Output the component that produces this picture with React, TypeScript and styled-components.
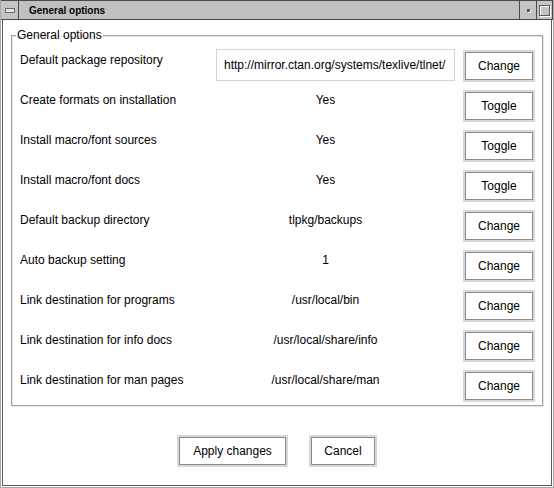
import styled, { createGlobalStyle } from "styled-components"

const GlobalStyle = createGlobalStyle`
  html, body {
    margin: 0;
    padding: 0;
    background: #ffffff;
  }
  body {
    font-family: "Liberation Sans", Arial, sans-serif;
    font-size: 12px;
    color: #000000;
  }
`

const Window = styled.div`
  width: 554px;
  height: 488px;
  box-sizing: border-box;
  display: flex;
  flex-direction: column;
  background: #ffffff;
  border-left: 1px solid #a8a8a8;
  border-right: 1px solid #a8a8a8;
  border-bottom: 1px solid #a8a8a8;
`

const Frame = styled.div`
  flex: 1;
  display: flex;
  flex-direction: column;
  margin: 0 1px 1px 1px;
  border-left: 1px solid #5c5c5c;
  border-right: 1px solid #5c5c5c;
  border-bottom: 1px solid #5c5c5c;
`

const TitleBar = styled.div`
  height: 20px;
  display: flex;
  box-sizing: border-box;
  border-top: 1px solid #4a4a4a;
  border-bottom: 1px solid #4a4a4a;
  background: #c0c0c0;
`

const TitleBox = styled.div<{ $w: number }>`
  width: ${({ $w }) => $w}px;
  flex: none;
  display: flex;
  align-items: center;
  justify-content: center;
  box-sizing: border-box;
  border-right: 1px solid #4a4a4a;
  background: #c4c4c4;
`

const MenuGlyph = styled.div`
  width: 8px;
  height: 3px;
  border: 1px solid #6a6a6a;
  background: #e4e4e4;
`

const DotGlyph = styled.div`
  width: 3px;
  height: 3px;
  background: #5a5a5a;
  box-shadow: 1px 1px 0 #ffffff;
`

const SquareGlyph = styled.div`
  width: 9px;
  height: 9px;
  border: 1px solid #5a5a5a;
  box-shadow: 1px 1px 0 #ffffff, inset 1px 1px 0 #ffffff;
`

const Title = styled.div`
  flex: 1;
  padding-left: 10px;
  display: flex;
  align-items: center;
  font-weight: bold;
  font-size: 10px;
  box-sizing: border-box;
  border-right: 1px solid #4a4a4a;
`

const Group = styled.fieldset`
  margin: 8px 8px 0 8px;
  padding: 8px 7px 3px 8px;
  border: 1px solid #a4a4a4;
  box-shadow: 1px 1px 0 #e4e4e4, inset 1px 1px 0 #e4e4e4;
`

const Legend = styled.legend`
  padding: 0 1px;
  margin-left: -4px;
  font-size: 12px;
  line-height: 14px;
`

const Rows = styled.div`
  display: grid;
  grid-template-columns: 168px 259px 72px;
  grid-auto-rows: 32px;
  column-gap: 8px;
  row-gap: 8px;
`

const Label = styled.div`
  padding-top: 3px;
  line-height: 14px;
  white-space: nowrap;
`

const Value = styled.div`
  padding-top: 3px;
  line-height: 14px;
  text-align: center;
  white-space: nowrap;
`

const Entry = styled.div`
  justify-self: end;
  width: 239px;
  height: 32px;
  margin-top: -1px;
  box-sizing: border-box;
  border: 1px solid #d4d4d4;
  padding-left: 7px;
  display: flex;
  align-items: center;
  white-space: nowrap;
  overflow: hidden;
`

const Button = styled.button<{ $w?: number }>`
  width: ${({ $w }) => ($w ? `${$w}px` : "100%")};
  height: 32px;
  box-sizing: border-box;
  margin: 0;
  padding: 0;
  border: 2px solid #d8d8d8;
  box-shadow: inset 0 0 0 1px #8a8a8a;
  background: #ffffff;
  font-family: "Liberation Sans", Arial, sans-serif;
  font-size: 12px;
  color: #000000;
`

const Footer = styled.div`
  display: flex;
  justify-content: center;
  gap: 21px;
  margin-top: 29px;
`

type Option = {
  label: string
  value: string
  action: "Change" | "Toggle"
  entry?: boolean
}

const options: Option[] = [
  {
    label: "Default package repository",
    value: "http://mirror.ctan.org/systems/texlive/tlnet/",
    action: "Change",
    entry: true,
  },
  { label: "Create formats on installation", value: "Yes", action: "Toggle" },
  { label: "Install macro/font sources", value: "Yes", action: "Toggle" },
  { label: "Install macro/font docs", value: "Yes", action: "Toggle" },
  { label: "Default backup directory", value: "tlpkg/backups", action: "Change" },
  { label: "Auto backup setting", value: "1", action: "Change" },
  { label: "Link destination for programs", value: "/usr/local/bin", action: "Change" },
  { label: "Link destination for info docs", value: "/usr/local/share/info", action: "Change" },
  { label: "Link destination for man pages", value: "/usr/local/share/man", action: "Change" },
]

const App = () => {
  return (
    <>
      <GlobalStyle />
      <Window>
        <TitleBar>
          <TitleBox $w={18}>
            <MenuGlyph />
          </TitleBox>
          <Title>General options</Title>
          <TitleBox $w={17}>
            <DotGlyph />
          </TitleBox>
          <TitleBox $w={16}>
            <SquareGlyph />
          </TitleBox>
        </TitleBar>
        <Frame>
          <Group>
            <Legend>General options</Legend>
            <Rows>
              {options.map((o) => [
                <Label key={`${o.label}-l`}>{o.label}</Label>,
                o.entry ? (
                  <Entry key={`${o.label}-v`}>{o.value}</Entry>
                ) : (
                  <Value key={`${o.label}-v`}>{o.value}</Value>
                ),
                <Button key={`${o.label}-b`}>{o.action}</Button>,
              ])}
            </Rows>
          </Group>
          <Footer>
            <Button $w={111}>Apply changes</Button>
            <Button $w={68}>Cancel</Button>
          </Footer>
        </Frame>
      </Window>
    </>
  )
}

export default App
